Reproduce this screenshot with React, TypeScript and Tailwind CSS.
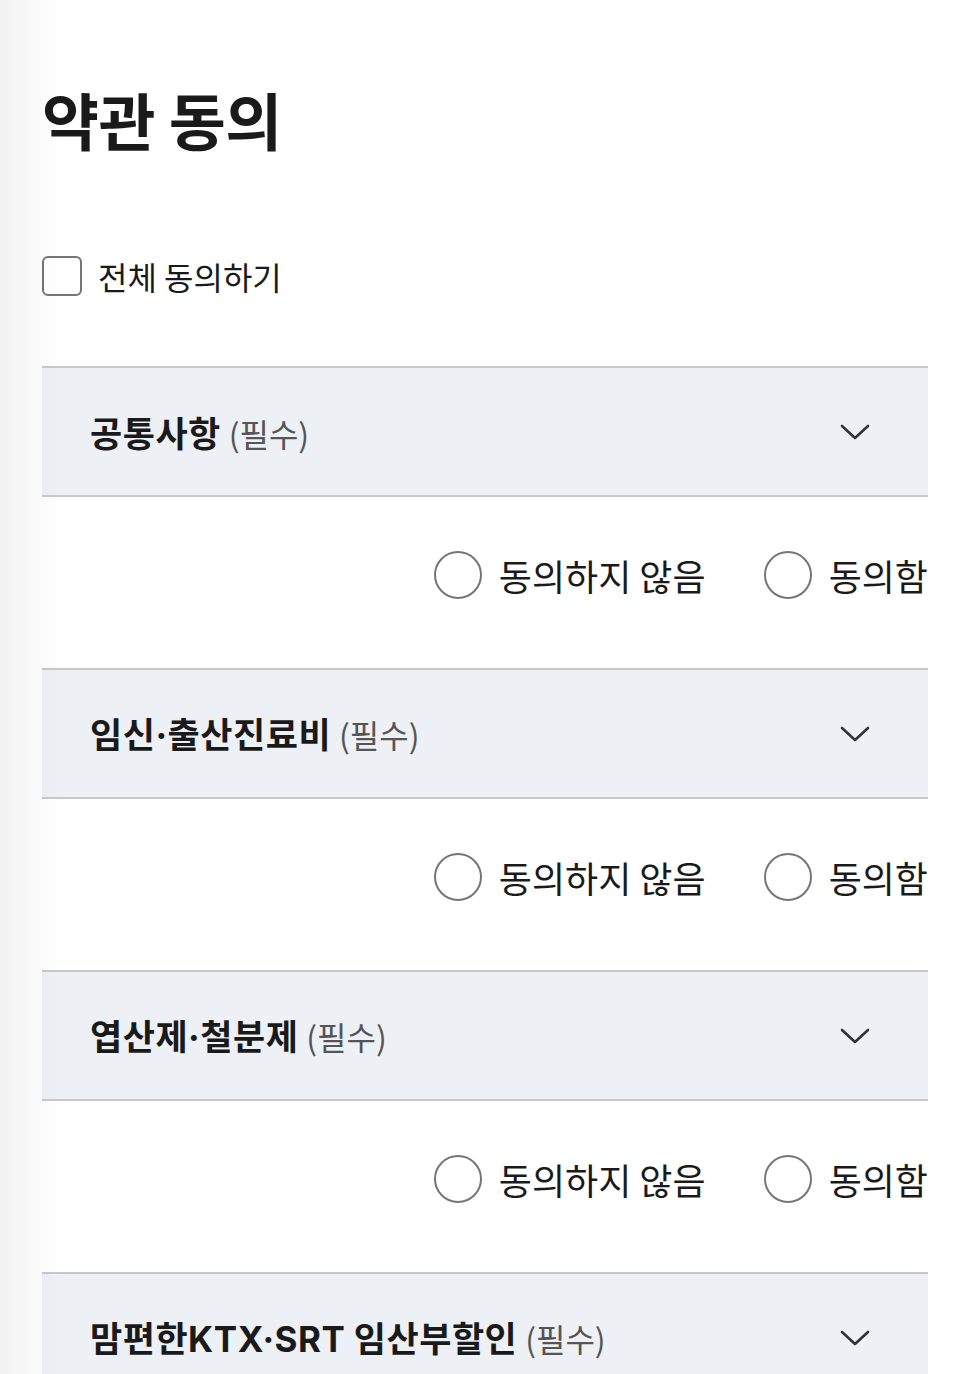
type Term = { title: string };

const terms: Term[] = [
  { title: '공통사항' },
  { title: '임신·출산진료비' },
  { title: '엽산제·철분제' },
  { title: '맘편한KTX·SRT 임산부할인' },
];

// middle dot and latin letters render in a latin face, like the original
function Title({ text }: { text: string }) {
  const parts = text.split(/([A-Za-z·]+)/);
  return (
    <b className="font-bold tracking-[0.5px]">
      {parts.map((p, i) =>
        /[A-Za-z·]/.test(p) ? (
          <span key={i} style={{ fontFamily: 'Inter, "Noto Sans", sans-serif' }}>
            {p}
          </span>
        ) : (
          <span key={i}>{p}</span>
        ),
      )}
    </b>
  );
}

function Radio({ label }: { label: string }) {
  return (
    <label className="flex items-center gap-[17px]">
      <span className="w-12 h-12 rounded-full border-2 border-[#767676] bg-white" />
      <span className="text-[36px] leading-[48px] text-[#1a1a1a]">{label}</span>
    </label>
  );
}

export default function App() {
  return (
    <div
      className="relative min-h-[1374px] bg-white pl-[42px] pr-[30px] pt-[82px] overflow-hidden"
      style={{ fontFamily: '"Noto Sans CJK KR", "Noto Sans", sans-serif' }}
    >
      <div className="pointer-events-none absolute left-0 top-0 bottom-0 w-[60px] bg-gradient-to-r from-[rgba(0,0,0,0.05)] to-transparent" />
      <h1 className="text-[62px] font-bold leading-[1.2] text-[#1a1a1a] tracking-[-0.5px]">약관 동의</h1>

      <label className="mt-[100px] flex items-center gap-4">
        <span className="w-10 h-10 rounded-md border-2 border-[#757575] bg-white" />
        <span className="text-[32px] leading-[40px] text-[#1a1a1a]">전체 동의하기</span>
      </label>

      <div className="mt-[70px] flex flex-col">
        {terms.map((t, i) => (
          <div key={i}>
            <div className="h-[131px] bg-[#edf0f5] border-y-2 border-[#c8c8c8] flex items-center justify-between pl-12 pr-[58px]">
              <span className="text-[35px] text-[#1a1a1a]">
                <Title text={t.title} />{' '}
                <span className="text-[32px] text-[#555]">(필수)</span>
              </span>
              <svg width="30" height="18" viewBox="0 0 30 18" fill="none" className="text-[#333]">
                <polyline
                  points="2,3 15,15 28,3"
                  stroke="currentColor"
                  strokeWidth="2.6"
                  strokeLinecap="round"
                  strokeLinejoin="round"
                />
              </svg>
            </div>
            <div className="h-[171px] pb-4 flex items-center justify-end gap-[58px]">
              <Radio label="동의하지 않음" />
              <Radio label="동의함" />
            </div>
          </div>
        ))}
      </div>
    </div>
  );
}
